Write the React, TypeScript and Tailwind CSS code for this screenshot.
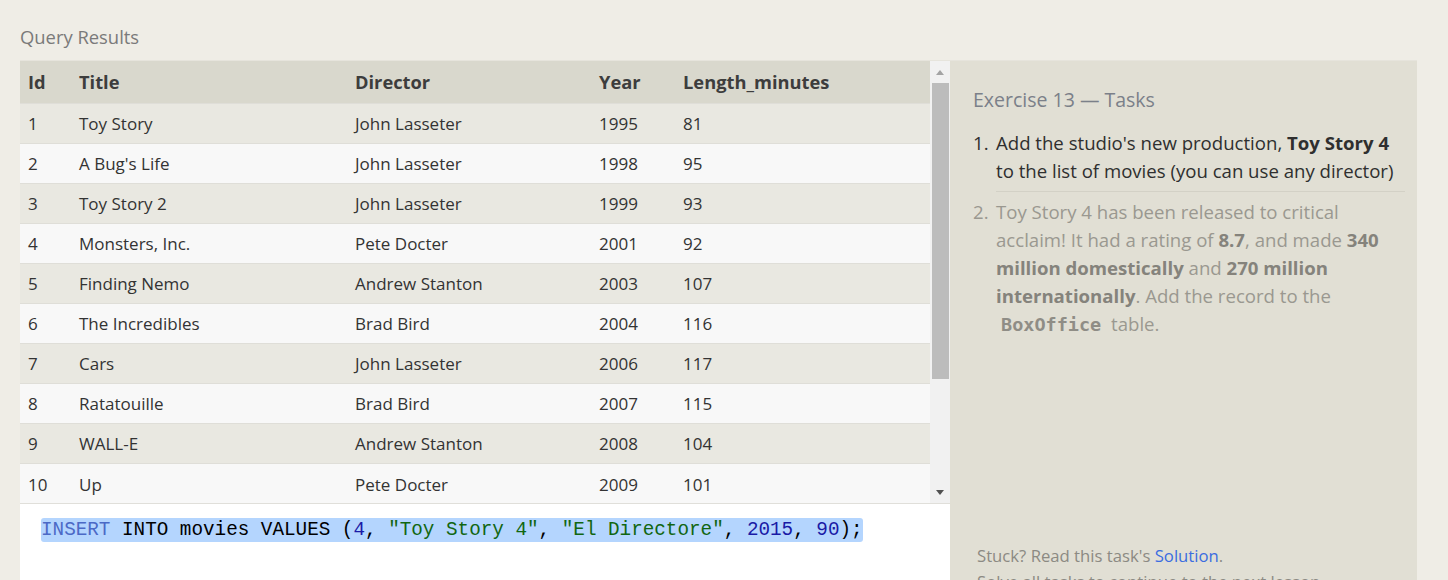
import React from "react"

const MOVIES = [
  { id: 1, title: "Toy Story", director: "John Lasseter", year: 1995, len: 81 },
  { id: 2, title: "A Bug's Life", director: "John Lasseter", year: 1998, len: 95 },
  { id: 3, title: "Toy Story 2", director: "John Lasseter", year: 1999, len: 93 },
  { id: 4, title: "Monsters, Inc.", director: "Pete Docter", year: 2001, len: 92 },
  { id: 5, title: "Finding Nemo", director: "Andrew Stanton", year: 2003, len: 107 },
  { id: 6, title: "The Incredibles", director: "Brad Bird", year: 2004, len: 116 },
  { id: 7, title: "Cars", director: "John Lasseter", year: 2006, len: 117 },
  { id: 8, title: "Ratatouille", director: "Brad Bird", year: 2007, len: 115 },
  { id: 9, title: "WALL-E", director: "Andrew Stanton", year: 2008, len: 104 },
  { id: 10, title: "Up", director: "Pete Docter", year: 2009, len: 101 },
]

const COLS = [
  { label: "Id", w: "w-[51px]" },
  { label: "Title", w: "w-[276px]" },
  { label: "Director", w: "w-[244px]" },
  { label: "Year", w: "w-[84px]" },
  { label: "Length_minutes", w: "" },
]

function Scrollbar() {
  return (
    <div className="w-[20px] bg-[#f1f1f1] flex flex-col items-center">
      <div className="h-[22px] flex items-center justify-center">
        <span className="w-0 h-0 border-l-[4px] border-r-[4px] border-b-[5px] border-l-transparent border-r-transparent border-b-[#a3a3a3]" />
      </div>
      <div className="w-[17px] h-[296px] bg-[#bcbcbc]" />
      <div className="flex-1" />
      <div className="h-[22px] flex items-center justify-center">
        <span className="w-0 h-0 border-l-[4px] border-r-[4px] border-t-[5px] border-l-transparent border-r-transparent border-t-[#505050]" />
      </div>
    </div>
  )
}

function ResultsTable() {
  return (
    <div className="flex h-[443px] border-t border-[#e6e4dc]">
      <div className="flex-1 overflow-hidden">
        <table className="w-full border-collapse table-fixed text-[17px] text-[#333]">
          <thead>
            <tr className="bg-[#d9d8cd] h-[42px]">
              {COLS.map(c => (
                <th key={c.label} className={`${c.w} text-left pl-2 font-bold text-[18.3px] text-[#3d3d3d]`}>
                  {c.label}
                </th>
              ))}
            </tr>
          </thead>
          <tbody>
            {MOVIES.map((m, i) => (
              <tr
                key={m.id}
                className={`h-[40px] border-t border-[#dfded8] ${i % 2 === 0 ? "bg-[#e9e8e1]" : "bg-[#f8f8f8]"}`}
              >
                <td className="pl-2 pt-[2px]">{m.id}</td>
                <td className="pl-2 pt-[2px]">{m.title}</td>
                <td className="pl-2 pt-[2px]">{m.director}</td>
                <td className="pl-2 pt-[2px]">{m.year}</td>
                <td className="pl-2 pt-[2px]">{m.len}</td>
              </tr>
            ))}
          </tbody>
        </table>
      </div>
      <Scrollbar />
    </div>
  )
}

function CodeEditor() {
  return (
    <div className="flex-1 bg-white border-t border-[#e0dfda] pl-[21px] pt-[14px] font-['Liberation_Mono','DejaVu_Sans_Mono',monospace] text-[19.3px] leading-[25px]">
      <span className="bg-[#b4d5fe] rounded-[3px] py-[1px] whitespace-pre">
        <span className="text-[#4b69c6]">INSERT</span>
        <span className="text-black"> INTO movies VALUES (</span>
        <span className="text-[#1a1aa6]">4</span>
        <span className="text-black">, </span>
        <span className="text-[#116611]">"Toy Story 4"</span>
        <span className="text-black">, </span>
        <span className="text-[#116611]">"El Directore"</span>
        <span className="text-black">, </span>
        <span className="text-[#1a1aa6]">2015</span>
        <span className="text-black">, </span>
        <span className="text-[#1a1aa6]">90</span>
        <span className="text-black">);</span>
      </span>
    </div>
  )
}

function TasksPanel() {
  return (
    <div className="w-[467px] bg-[#e1dfd4] border-t border-[#e6e4dc] pl-[23px] pr-[12px] pt-[25px] flex flex-col">
      <h3 className="text-[19.5px] text-[#7b8089] leading-[28px]">Exercise 13 — Tasks</h3>
      <ol className="mt-[15px] text-[18.6px] leading-[28px]">
        <li className="flex text-[#2f2f2f]">
          <span className="w-[23px] shrink-0">1.</span>
          <div className="flex-1 border-b border-[#d3d1c6] pb-[6px]">
            Add the studio's new production, <b>Toy Story 4</b> to the list of movies (you can use any director)
          </div>
        </li>
        <li className="flex text-[#9a9890] mt-[6px]">
          <span className="w-[23px] shrink-0">2.</span>
          <div className="flex-1 pr-[20px]">
            Toy Story 4 has been released to critical acclaim! It had a rating of <b className="text-[#85837c]">8.7</b>, and made{" "}
            <b className="text-[#85837c]">340 million domestically</b> and <b className="text-[#85837c]">270 million internationally</b>. Add the record to the{" "}
            <code className="font-['DejaVu_Sans_Mono',monospace] font-bold text-[18.5px] text-[#8f8d86] px-[5px]">BoxOffice</code> table.
          </div>
        </li>
      </ol>
      <div className="flex-1" />
      <p className="text-[16.7px] leading-[26px] text-[#8c8a83] pl-[4px] -mb-[5px]">
        Stuck? Read this task's <span className="text-[#3b6de0]">Solution</span>.
        <br />
        Solve all tasks to continue to the next lesson.
      </p>
    </div>
  )
}

export default function App() {
  return (
    <div className="w-[1448px] h-[580px] overflow-hidden bg-[#efede6] font-['Open_Sans','Noto_Sans',sans-serif]">
      <div className="pl-[20px] pt-[24px]">
        <h2 className="text-[18.4px] leading-[26px] text-[#7a7a7a] mb-[10px]">Query Results</h2>
        <div className="flex h-[530px]">
          <div className="w-[930px] flex flex-col">
            <ResultsTable />
            <CodeEditor />
          </div>
          <TasksPanel />
        </div>
      </div>
    </div>
  )
}
